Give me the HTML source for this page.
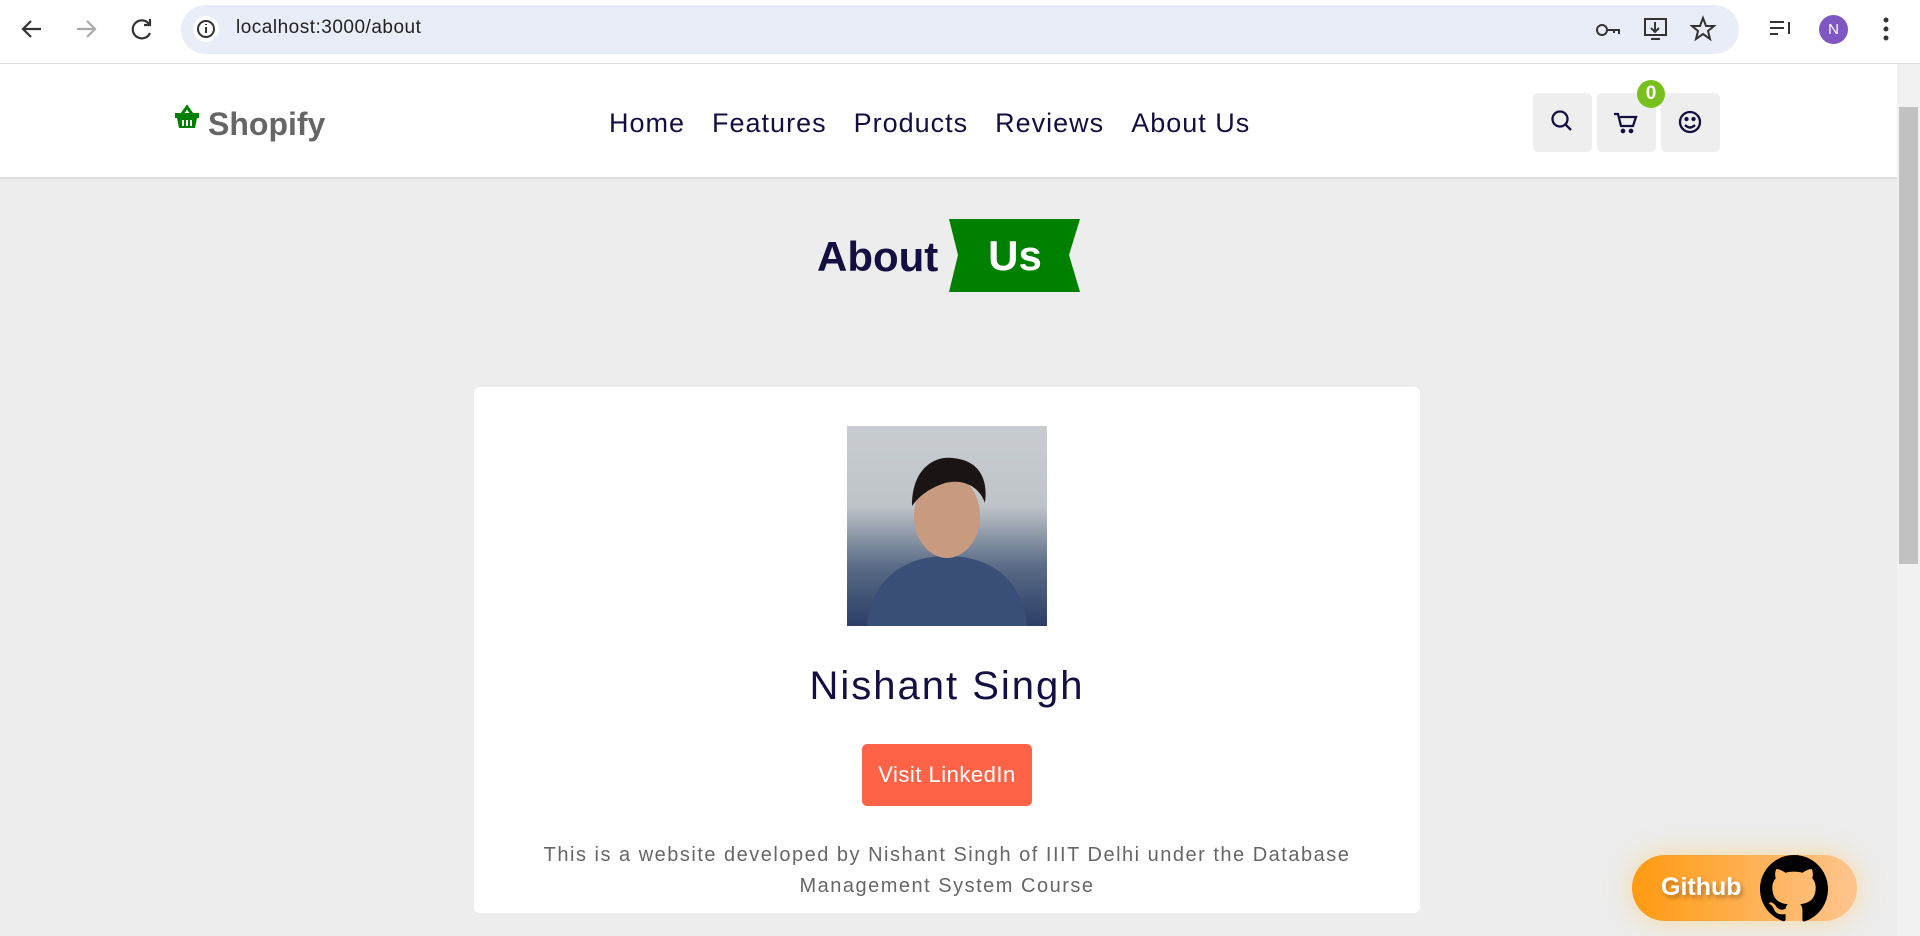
<!DOCTYPE html>
<html><head><meta charset="utf-8"><style>
*{margin:0;padding:0;box-sizing:border-box}
body{width:1920px;height:936px;overflow:hidden;background:#ededed;font-family:"Liberation Sans",sans-serif;position:relative}
.chrome{position:absolute;left:0;top:0;width:1920px;height:64px;background:#fff;border-bottom:1px solid #ddd}
.addr{position:absolute;left:181px;top:5px;width:1558px;height:49px;background:#e9edf7;border-radius:25px}
.url{position:absolute;left:236px;top:17px;font-size:19px;color:#222;letter-spacing:.5px}
.nav{position:absolute;left:0;top:64px;width:1897px;height:115px;background:#fff;border-bottom:2px solid #ddd}
.logo{position:absolute;left:208px;top:42px;font-size:32px;font-weight:bold;color:#666}
.links{position:absolute;left:609px;top:44px;font-size:27px;color:#130f40;letter-spacing:1px;white-space:nowrap}
.links span{margin-right:27px}
.btn{position:absolute;top:29px;width:59px;height:59px;background:#eee;border-radius:5px}
.badge{position:absolute;left:1637px;top:80px;width:28px;height:28px;border-radius:14px;background:#78c01e;color:#fff;font-weight:bold;font-size:19px;text-align:center;line-height:28px}
.sb{position:absolute;left:1897px;top:64px;width:23px;height:872px;background:#f1f1f1}
.thumb{position:absolute;left:1899px;top:107px;width:19px;height:457px;background:#c1c1c1}
.about{position:absolute;left:817px;top:233px;font-size:42px;font-weight:bold;color:#130f40}
.card{position:absolute;left:474px;top:387px;width:946px;height:526px;background:#fff;border-radius:6px}
.photo{position:absolute;left:847px;top:426px;width:200px;height:200px;background:linear-gradient(#c8ccd0 0,#bfc4c8 40%,#5a6c86 70%,#2c3e66 100%)}
.name{position:absolute;left:474px;width:946px;top:664px;text-align:center;font-size:40px;color:#130f40;letter-spacing:2px}
.li{position:absolute;left:862px;top:744px;width:170px;height:62px;background:#ff6347;border-radius:5px;color:#fff;font-size:22px;text-align:center;line-height:62px;letter-spacing:.5px}
.p{position:absolute;left:474px;width:946px;top:840px;text-align:center;font-size:20px;line-height:31px;color:#666;letter-spacing:1.5px}
.gh{position:absolute;left:1632px;top:855px;width:225px;height:66px;border-radius:33px;background:linear-gradient(90deg,#ff9a10,#ffc58f);box-shadow:0 0 25px rgba(255,200,80,.5)}
.gh span{position:absolute;left:29px;top:18px;font-size:25px;font-weight:bold;color:#fff;text-shadow:2px 3px 4px rgba(0,0,0,.3)}
</style></head><body>
<div class="chrome">
<svg width="1920" height="64" style="position:absolute;left:0;top:0" fill="none" stroke="#333" stroke-width="2.2">
<path d="M41 29H24M31 21l-8 8 8 8"/>
<path d="M77 29h17M87 21l8 8-8 8" stroke="#aaa"/>
<path d="M149 24a9 9 0 1 0 1 9M150 19v6h-6"/>
</svg>
<div class="addr"></div>
<svg width="1920" height="64" style="position:absolute;left:0;top:0" fill="none" stroke="#333" stroke-width="2">
<circle cx="206" cy="29" r="13" fill="#fff" stroke="none"/><circle cx="206" cy="29" r="8"/><path d="M206 27v6M206 24v1"/>
<circle cx="1602" cy="30" r="5"/><path d="M1607 30h12v4M1614 30v3"/>
<rect x="1645" y="19" width="21" height="16"/><path d="M1655 22v9M1651 28l4 4 4-4M1651 39h9"/>
<path d="M1703 18l3 8h8l-6 5 2 8-7-5-7 5 2-8-6-5h8z"/>
<path d="M1770 22h14M1770 28h14M1770 34h8M1789 22v12"/>
<circle cx="1886" cy="20" r="1.5" fill="#333"/><circle cx="1886" cy="29" r="1.5" fill="#333"/><circle cx="1886" cy="38" r="1.5" fill="#333"/>
</svg>
<div style="position:absolute;left:1819px;top:15px;width:29px;height:29px;border-radius:50%;background:#7e57c2;color:#fff;font-size:15px;text-align:center;line-height:29px">N</div>
<div class="url">localhost:3000/about</div>
</div>
<div class="nav">
<svg width="26" height="26" style="position:absolute;left:174px;top:40px" viewBox="0 0 26 26"><path d="M8 10l5-7 5 7" fill="none" stroke="green" stroke-width="3"/><rect x="1" y="9" width="24" height="5" fill="green"/><path d="M3 14h20l-2 10H5z" fill="green"/><path d="M9 16v6M13 16v6M17 16v6" stroke="#fff" stroke-width="2"/></svg>
<div class="logo">Shopify</div>
<div class="links"><span>Home</span><span>Features</span><span>Products</span><span>Reviews</span><span>About Us</span></div>
<div class="btn" style="left:1533px"></div><div class="btn" style="left:1597px"></div><div class="btn" style="left:1661px"></div>
<svg width="1920" height="115" style="position:absolute;left:0;top:0" fill="none" stroke="#130f40" stroke-width="2.3">
<circle cx="1560" cy="55" r="7.5"/><path d="M1566 61l5 5"/>
<path d="M1614 50h4l3 12h12l3-9h-16"/><circle cx="1623" cy="67" r="1.2" fill="#130f40"/><circle cx="1631" cy="67" r="1.2" fill="#130f40"/>
<circle cx="1690" cy="58" r="10"/><path d="M1685 61q5 5 10 0"/><circle cx="1686.5" cy="55" r="1" fill="#130f40"/><circle cx="1693.5" cy="55" r="1" fill="#130f40"/>
</svg>
</div>
<div class="badge">0</div>
<div class="sb"></div><div class="thumb"></div>
<div class="about">About</div>
<svg width="132" height="74" style="position:absolute;left:949px;top:219px"><path d="M0 0H131L120 36 131 73H0L9 36Z" fill="#008000"/><text x="66" y="51" text-anchor="middle" font-family="Liberation Sans" font-weight="bold" font-size="42" fill="#fff">Us</text></svg>
<div class="card"></div>
<div class="photo"></div>
<svg width="200" height="200" style="position:absolute;left:847px;top:426px"><path d="M20 200c5-50 40-70 80-70s75 20 80 70z" fill="#3a4f78"/><ellipse cx="100" cy="90" rx="33" ry="42" fill="#c89a80"/><path d="M65 80c0-40 25-50 40-48 30 2 36 25 33 45-5-15-20-25-40-20-15 5-25 12-33 23z" fill="#1a1414"/></svg>
<div class="name">Nishant Singh</div>
<div class="li">Visit LinkedIn</div>
<div class="p">This is a website developed by Nishant Singh of IIIT Delhi under the Database<br>Management System Course</div>
<div class="gh"><span>Github</span>
<svg width="68" height="68" viewBox="0 0 16 16" style="position:absolute;left:128px;top:0"><path fill="#000" d="M8 0C3.58 0 0 3.580 0 8c0 3.54 2.29 6.53 5.47 7.590.4.07.55-.17.55-.38v-1.33c-2.23.48-2.7-1.07-2.7-1.07-.36-.92-.89-1.170-.89-1.170-.73-.5.05-.49.05-.49.8.06 1.23.83 1.23.83.71 1.22 1.870.87 2.330.66.07-.52.28-.87.5-1.07-1.78-.2-3.64-.89-3.64-3.95 0-.87.31-1.59.82-2.15-.08-.2-.36-1.02.08-2.12 0 0 .67-.21 2.2.82.64-.18 1.32-.27 2-.27s1.36.09 2 .27c1.53-1.04 2.2-.82 2.2-.82.44 1.1.16 1.92.08 2.12.51.56.82 1.27.82 2.15 0 3.07-1.87 3.75-3.65 3.95.29.25.54.73.54 1.48v2.2c0 .21.15.46.55.38A8.01 8.01 0 0 0 16 8c0-4.42-3.58-8-8-8z"/></svg>
</div>
</body></html>
